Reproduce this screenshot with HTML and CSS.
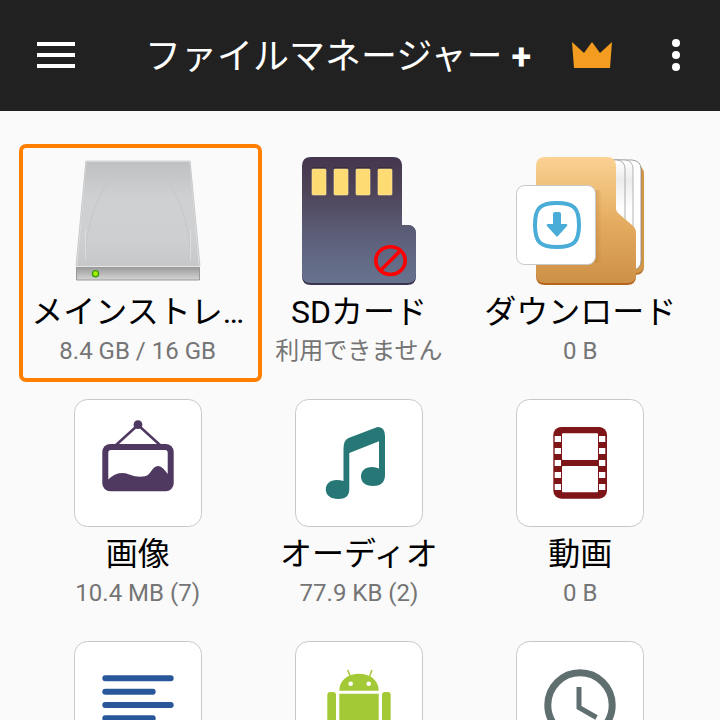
FILE: index.html
```
<!DOCTYPE html>
<html lang="ja">
<head>
    <meta charset="UTF-8">
    <meta name="viewport" content="width=device-width, initial-scale=1">
    <title>ファイルマネージャー +</title>
    <link rel="stylesheet" href="styles.css">
</head>
<body>
    <header class="toolbar">
        <button class="icon-btn" type="button">
            <svg width="38" height="28" viewBox="0 0 38 28"><path d="M0 3h38M0 14h38M0 25h38" stroke="#fff" stroke-width="4"/></svg>
        </button>
        <h1>ファイルマネージャー <b>+</b></h1>
        <button class="icon-btn crown" type="button">
            <svg width="40" height="26" viewBox="0 0 40 26"><path d="M0 0l12 11 8-11 8 11L40 0l-2 26H2z" fill="#f39c1f"/></svg>
        </button>
        <button class="icon-btn" type="button">
            <svg width="8" height="32" viewBox="0 0 8 32" fill="#fff"><circle cx="4" cy="4" r="4"/><circle cx="4" cy="16" r="4"/><circle cx="4" cy="28" r="4"/></svg>
        </button>
    </header>

    <main class="grid">
        <button class="tile selected" type="button">
            <svg class="icon" viewBox="0 0 128 128">
                <defs>
                    <linearGradient id="hddTop" x1="0" y1="0" x2="0" y2="1">
                        <stop offset="0" stop-color="#bfc0c1"/>
                        <stop offset=".35" stop-color="#cfd0d2"/>
                        <stop offset=".75" stop-color="#cecfd1"/>
                        <stop offset="1" stop-color="#c6c7c9"/>
                    </linearGradient>
                    <linearGradient id="hddFront" x1="0" y1="0" x2="0" y2="1">
                        <stop offset="0" stop-color="#999"/>
                        <stop offset="1" stop-color="#d6d6d6"/>
                    </linearGradient>
                </defs>
                <path d="M12 4h104l10 106H2z" fill="url(#hddTop)"/>
                <path d="M11.500 103C11.500 60 32 8 64 8s52.500 52 52.500 95" fill="none" stroke="#c3c4c5" stroke-width=".8"/>
                <path d="M11.500 73V103M116.500 73V103" stroke="#dfe0e1" stroke-width=".8"/>
                <path d="M2.500 109.500L12 4.500h104l9.500 105z" fill="none" stroke="#e4e5e6" stroke-width="1.200"/>
                <path d="M12 4h104" stroke="#b9babb" stroke-width=".6"/>
                <path d="M12 4L2 109M116 4l10 105" stroke="#bcbdbe" stroke-width=".7"/>
                <path d="M2 110h124v12q0 1-1 1H3q-1 0-1-1z" fill="url(#hddFront)"/>
                <path d="M2.500 111v12h123v-12" fill="none" stroke="#999"/>
                <circle cx="21.500" cy="116.700" r="3.800" fill="#3f9b12"/>
                <circle cx="21.500" cy="116.700" r="2.400" fill="#a4f000"/>
            </svg>
            <span class="name">メインストレ…</span>
            <span class="info">8.4 GB / 16 GB</span>
        </button>

        <button class="tile" type="button">
            <svg class="icon" viewBox="0 0 128 128">
                <defs>
                    <linearGradient id="sd" x1="0" y1="0" x2="0" y2="1">
                        <stop offset="0" stop-color="#44364e"/>
                        <stop offset=".25" stop-color="#4d4257"/>
                        <stop offset=".6" stop-color="#5b5d77"/>
                        <stop offset="1" stop-color="#68738f"/>
                    </linearGradient>
                </defs>
                <path d="M16 2h82q9 0 9 9v57h5q9 0 9 9v42q0 9-9 9H16q-9 0-9-9V11z" fill="#373350"/>
                <path d="M16 0h82q9 0 9 9v59h5q9 0 9 9v40q0 9-9 9H16q-9 0-9-9V9q0-9 9-9z" fill="url(#sd)"/>
                <g fill="#352f3c"><rect x="17" y="10" width="14" height="8" rx="1"/><rect x="39" y="10" width="14" height="8" rx="1"/><rect x="61" y="10" width="14" height="8" rx="1"/><rect x="83" y="10" width="14" height="8" rx="1"/></g>
                <g fill="#ffdb73" stroke="#ffe7a4" stroke-width=".6"><rect x="17" y="12" width="14" height="26" rx="1"/><rect x="39" y="12" width="14" height="26" rx="1"/><rect x="61" y="12" width="14" height="26" rx="1"/><rect x="83" y="12" width="14" height="26" rx="1"/></g>
                <ellipse cx="95.500" cy="103.600" rx="14.700" ry="13.900" fill="none" stroke="#f00" stroke-width="3.600"/>
                <path d="M85.500 113.500l20-20" stroke="#f00" stroke-width="3.600"/>
            </svg>
            <span class="name">SDカード</span>
            <span class="info">利用できません</span>
        </button>

        <button class="tile" type="button">
            <svg class="icon" viewBox="0 0 128 128">
                <defs>
                    <linearGradient id="folder" x1="0" y1="0" x2="0" y2="1">
                        <stop offset="0" stop-color="#fbd294"/>
                        <stop offset=".5" stop-color="#e5ad61"/>
                        <stop offset="1" stop-color="#cd9147"/>
                    </linearGradient>
                    <linearGradient id="page" x1="0" y1="0" x2="0" y2="1">
                        <stop offset="0" stop-color="#fff"/>
                        <stop offset=".2" stop-color="#ececec"/>
                        <stop offset=".5" stop-color="#fff"/>
                    </linearGradient>
                    <linearGradient id="shade" x1="0" x2="1">
                        <stop offset="0" stop-color="#a86618" stop-opacity=".35"/>
                        <stop offset="1" stop-color="#a86618" stop-opacity="0"/>
                    </linearGradient>
                </defs>
                <path d="M90 10h34q4 3 4 8v91q0 9-9 9H90z" fill="#b87531"/>
                <path d="M90 9h33q5 2 5 8v90q0 9-9 9H90z" fill="#d49748"/>
                <path d="M90 3h26q9 1 9 9v92q0 7-7 9H90z" fill="#fff" stroke="#858585" stroke-width=".8"/>
                <path d="M90 3h19q8 1 8 9v92H90z" fill="url(#page)" stroke="#a2a2a2" stroke-width=".8"/>
                <path d="M90 3h11q8 1 8 9v90H90z" fill="url(#page)" stroke="#999" stroke-width=".8"/>
                <path d="M20 12v107q0 9 9 9h82q9 0 9-9V75z" fill="#b6651f"/>
                <path d="M29 0h62q9 0 9 9v42q0 3 2 5l14 12q4 3 4 8v41q0 9-9 9H29q-9 0-9-9V9q0-9 9-9z" fill="url(#folder)"/>
                <rect x="78" y="33" width="8" height="73" rx="3" fill="url(#shade)"/>
                <rect x=".5" y="28.500" width="79" height="79" rx="8" fill="#fff" stroke="#c8c8c8"/>
                <path d="M41 46c17 0 22 5 22 22s-5 22-22 22-22-5-22-22 5-22 22-22z" fill="none" stroke="#49add7" stroke-width="4"/>
                <path d="M37 57q0-2 2-2h4q2 0 2 2v10h5q2 0 1 2l-9 10q-1 1-2 0l-9-10q-1-2 1-2h5z" fill="#49add7"/>
            </svg>
            <span class="name">ダウンロード</span>
            <span class="info">0 B</span>
        </button>

        <button class="tile" type="button">
            <svg class="icon" viewBox="0 0 128 128">
                <rect class="card" x=".5" y=".5" width="127" height="127" rx="13"/>
                <path d="M42 46l22-20 22 20" fill="none" stroke="#4f3961" stroke-width="2.500"/>
                <circle cx="64" cy="25.700" r="4.400" fill="#4f3961"/>
                <rect x="28.300" y="45" width="71.400" height="47.300" rx="8" fill="#4f3961"/>
                <path d="M37 51h54q2.700 0 2.700 2.700V75c-3-4-6-8-9.700-8-6 0-7 9-13 10.300-3 .6-7 .6-10 0-5-1-8-3.300-13-3.300-6 0-10 3-13.700 6.500V53.700Q34.300 51 37 51z" fill="#fff"/>
            </svg>
            <span class="name">画像</span>
            <span class="info">10.4 MB (7)</span>
        </button>

        <button class="tile" type="button">
            <svg class="icon" viewBox="0 0 128 128">
                <rect class="card" x=".5" y=".5" width="127" height="127" rx="13"/>
                <path d="M48.500 82V50q0-9 5-11l29-11q7.500 0 7.500 9v39c0 8-5 11-12 11-8 0-12-4-12-9.500S70 68 77 68q4 0 7 1.500V42.300L54.300 54v36c0 7-4 10-11 10-8 0-12.500-4-12.500-9.500s4-9.500 11-9.500q4 0 6.700 1z" fill="#277777"/>
            </svg>
            <span class="name">オーディオ</span>
            <span class="info">77.9 KB (2)</span>
        </button>

        <button class="tile" type="button">
            <svg class="icon" viewBox="0 0 128 128">
                <rect class="card" x=".5" y=".5" width="127" height="127" rx="13"/>
                <rect x="37.300" y="28" width="53.700" height="71.700" rx="8" fill="#7e1518"/>
                <g fill="#fff">
                    <rect x="46" y="34.300" width="36" height="26.700" rx="1"/>
                    <rect x="46" y="67" width="36" height="26.300" rx="1"/>
                    <path d="M38.700 37H45v6h-6.300zM38.700 49H45v6h-6.300zM38.700 61H45v6h-6.300zM38.700 73H45v6h-6.300zM38.700 85H45v6h-6.300z"/>
                    <path d="M83 37h6.300v6H83zM83 49h6.300v6H83zM83 61h6.300v6H83zM83 73h6.300v6H83zM83 85h6.300v6H83z"/>
                </g>
            </svg>
            <span class="name">動画</span>
            <span class="info">0 B</span>
        </button>

        <button class="tile" type="button">
            <svg class="icon" viewBox="0 0 128 128">
                <rect class="card" x=".5" y=".5" width="127" height="127" rx="13"/>
                <path d="M31.300 37.300h65.400M31.300 50.700h47.400M31.300 64h65.400M31.300 77.300h47.400M31.300 90.700h65.400" stroke="#2a579a" stroke-width="6" stroke-linecap="round"/>
            </svg>
        </button>

        <button class="tile" type="button">
            <svg class="icon" viewBox="0 0 128 128">
                <rect class="card" x=".5" y=".5" width="127" height="127" rx="13"/>
                <g fill="#a4c936">
                    <path d="M44.300 49.700C44.300 39 53 32.700 64 32.700s19.700 6.300 19.700 17z"/>
                    <path d="M52.800 29l2.400 6.500M77 29l-2.400 6.500" stroke="#a4c936" stroke-width="1.500"/>
                    <path d="M44.300 52.700h39.400V84q0 4-4 4H76v11h-8V88h-8v11h-8V88h-3.700q-4 0-4-4z"/>
                    <rect x="32.300" y="51" width="8.700" height="32" rx="3"/>
                    <rect x="87" y="51" width="8.700" height="32" rx="3"/>
                </g>
                <circle cx="55.700" cy="42.700" r="2.300" fill="#fff"/>
                <circle cx="73.700" cy="42.700" r="2.300" fill="#fff"/>
            </svg>
        </button>

        <button class="tile" type="button">
            <svg class="icon" viewBox="0 0 128 128">
                <rect class="card" x=".5" y=".5" width="127" height="127" rx="13"/>
                <g fill="none" stroke="#5f6f6f">
                    <circle cx="64" cy="64" r="32.200" stroke-width="7"/>
                    <path d="M63 46v20.500l17.500 10" stroke-width="5"/>
                </g>
            </svg>
        </button>
    </main>
</body>
</html>
```
FILE: styles.css
```
* { box-sizing: border-box; }
body {
    display: flex;
    flex-direction: column;
    height: 100vh;
    margin: 0;
    background: #fafafa;
    font-family: Roboto, "Noto Sans CJK JP", sans-serif;
}
button { padding: 0; border: none; background: none; font-family: inherit; cursor: pointer; }
svg { display: block; flex: none; }

.toolbar {
    display: flex;
    align-items: center;
    flex: none;
    padding: 27px 40px 29px 37px;
    background: #212121;
    color: #fff;
}
.toolbar h1 {
    flex: 1;
    margin: 0 0 0 70px;
    padding-top: 5px;
    font-size: 36px;
    line-height: 50px;
    font-weight: 400;
    white-space: nowrap;
}
.crown { margin-right: 60px; }

.grid {
    display: grid;
    grid-template-columns: repeat(3, minmax(0, 1fr));
    align-content: start;
    gap: 32px 0;
    flex: 1;
    min-height: 0;
    padding: 46px 29px 0 27px;
    overflow: hidden;
}
.tile {
    position: relative;
    display: flex;
    flex-direction: column;
    align-items: center;
    color: #000;
}
.icon { width: 128px; height: 128px; }
.card { fill: #fff; stroke: #c8c8c8; }
.name {
    max-width: 100%;
    margin-top: 3px;
    font-size: 32px;
    line-height: 48px;
    white-space: nowrap;
}
.info { margin-bottom: 1px; color: #757575; font-size: 24px; line-height: 30px; white-space: nowrap; }

/* frame around the chosen tile */
.selected::after {
    content: "";
    position: absolute;
    inset: -13px -14px -15px -8px;
    border: 4px solid #ff8000;
    border-radius: 7px;
}
```
